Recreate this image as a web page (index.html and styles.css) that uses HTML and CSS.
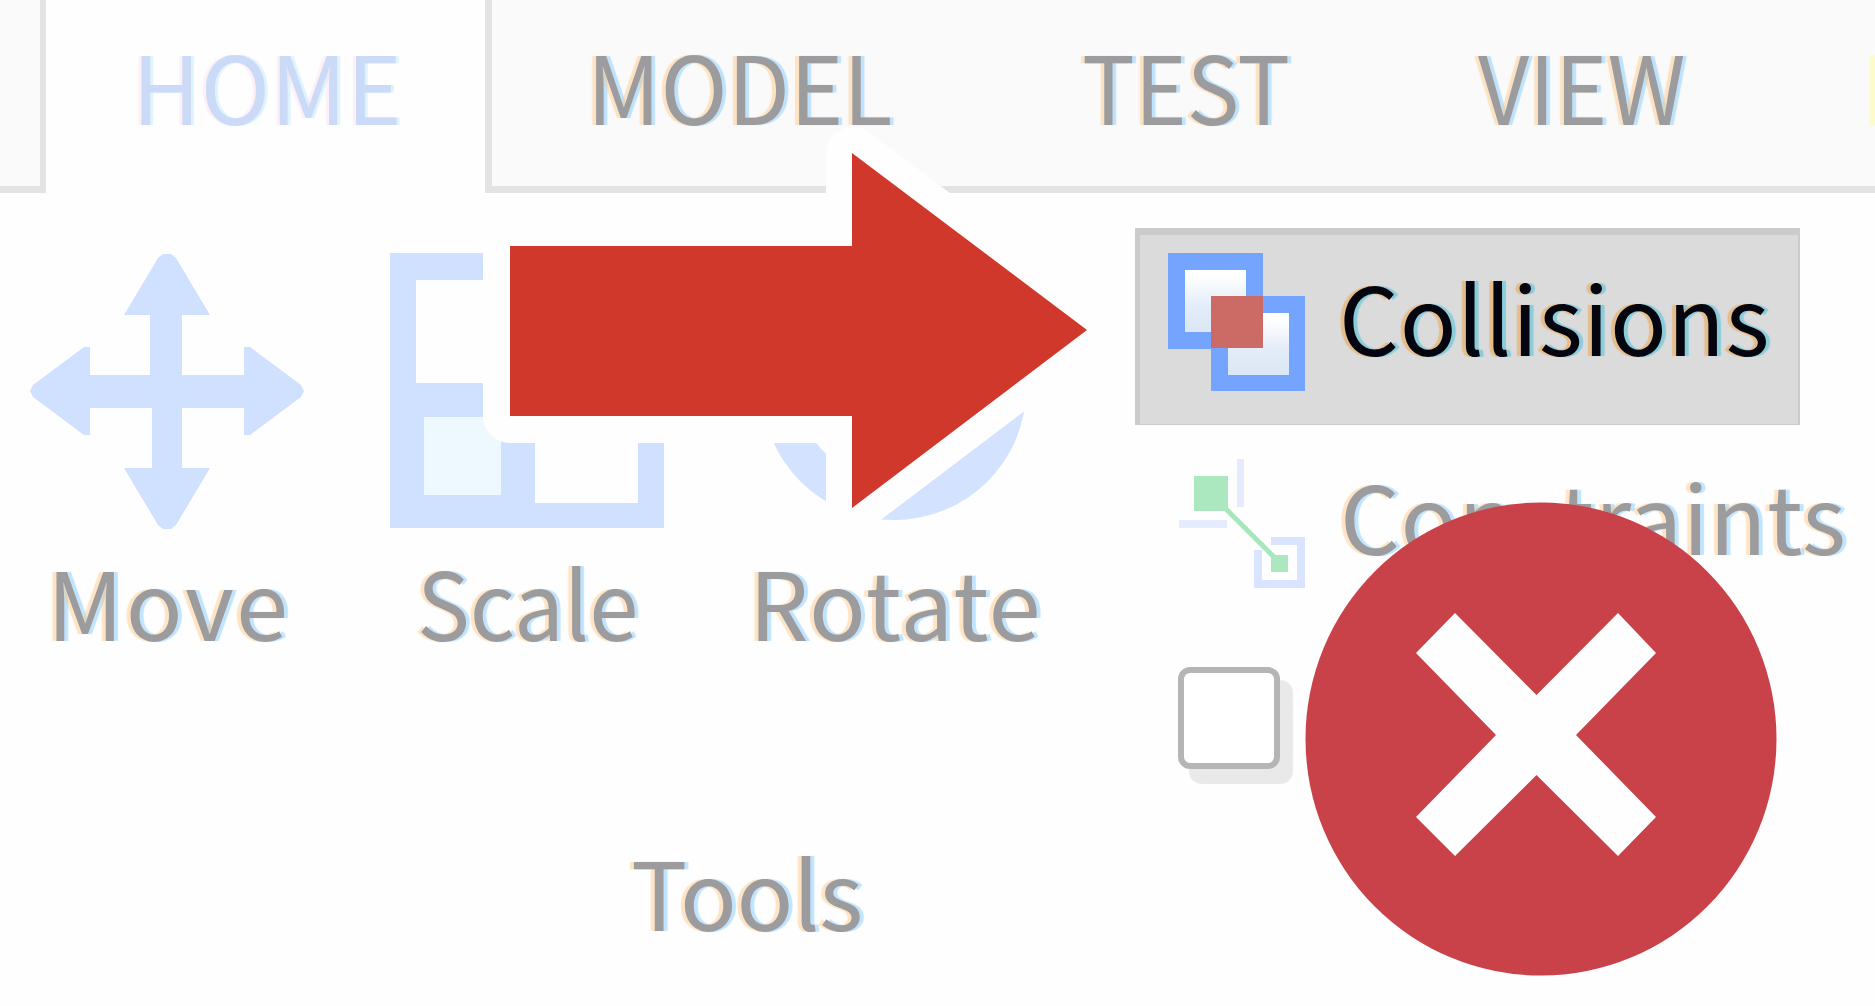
FILE: index.html
```html
<!DOCTYPE html>
<html lang="en">
<head>
<meta charset="utf-8">
<title>Ribbon</title>
<link rel="stylesheet" href="styles.css">
</head>
<body>
<div class="ribbon">
  <nav class="tabs">
    <div class="tab-prev"></div>
    <div class="tab tab-home"><span class="t-home">HOME</span></div>
    <div class="tab-rest">
      <span class="t-model">MODEL</span>
      <span class="t-test">TEST</span>
      <span class="t-view">VIEW</span>
      <i class="next-edge"></i>
    </div>
  </nav>
  <main class="panel">
    <section class="tools">
      <div class="tool-row">
        <div class="tool tool-move">
          <svg width="276" height="276" viewBox="0 0 276 276"><path fill="#d0e0ff" d="M134 1h8l5 4 34 57h-28v60h62V94h6l51 38 3 6-3 6-51 38h-6v-27h-62v60h28l-34 57-5 4h-8l-5-4-34-57h28v-60H61v27h-6L4 144l-3-6 3-6 51-38h6v28h60V62H95l34-57z"/></svg>
          <span class="t-move">Move</span>
        </div>
        <div class="tool tool-scale">
          <svg width="274" height="276" viewBox="0 0 274 276"><path fill="#d0e0ff" d="M0 0h274v275H0z"/><path fill="#fefefe" d="M26 27h222v223H145V130H26z"/><path fill="#eef8ff" d="M34 164h77v78H34z"/></svg>
          <span class="t-scale">Scale</span>
        </div>
        <div class="tool tool-rotate">
          <svg width="276" height="276" viewBox="0 0 276 276"><ellipse cx="132" cy="136" rx="132" ry="131" fill="#d3e2ff"/><circle cx="125" cy="136" r="89" fill="#fefefe"/></svg>
          <span class="t-rotate">Rotate</span>
        </div>
      </div>
      <div class="group-name"><span class="t-tools">Tools</span></div>
    </section>
    <section class="options">
      <div class="option active">
        <svg width="140" height="142" viewBox="0 0 140 142">
          <defs><linearGradient id="pane" x2="0" y2="1"><stop offset=".1" stop-color="#fff"/><stop offset=".6" stop-color="#e3ecf8"/><stop offset="1" stop-color="#dbe7f6"/></linearGradient></defs>
          <path fill="#75a4ff" d="M1 1h95v96H1zM44 44h94v95H44z"/>
          <path fill="url(#pane)" d="M18 18h61v62H18z"/><path fill="url(#pane)" d="M61 61h61v62H61z"/>
          <path fill="#cc6a66" d="M44 44h52v52H44z"/>
        </svg>
        <span class="t-coll">Collisions</span>
      </div>
      <div class="option constraints">
        <svg width="130" height="132" viewBox="0 0 130 132">
          <path fill="#e7ebff" d="M60 1h7v48h-7zM2 62h48v8H2z"/>
          <path fill="#dbe4ff" d="M94 79h34v51H77V92h8v30h35V87H94z"/>
          <path stroke="#a9e6bd" stroke-width="5" d="M46 48l54 54"/>
          <path fill="#abe7bf" d="M17 18h34v35H17zM94 97h17v17H94z"/>
        </svg>
        <span class="t-cons">Constraints</span>
      </div>
      <div class="option"><span class="checkbox"></span></div>
    </section>
  </main>
  <svg class="arrow" width="680" height="440" viewBox="450 110 680 440"><path d="M510 246H853V154L1087 330 853 507V416H510z" fill="#fefefe" stroke="#fefefe" stroke-width="54" stroke-linejoin="round"/><path d="M510 246H852V153L1087 330 852 508V416H510z" fill="#cf382a"/></svg>
  <svg class="cross" width="472" height="476" viewBox="1305 501 472 476"><ellipse cx="1541" cy="739" rx="235.500" ry="236.500" fill="#ca4249"/><path fill="#fefefe" d="M1455 613l81.500 82 81.500-82 38 40-80 82 80 82-38 39-81.500-81-81.500 81-39-39 80-82-80-82z"/></svg>
</div>
</body>
</html>
```
FILE: styles.css
```css
body { margin: 0; }
.ribbon {
  position: relative;
  width: 1875px;
  height: 1006px;
  overflow: hidden;
  background: #fefefe;
  color: #9c9c9e;
  font: 400 94px/100px "Noto Sans CJK SC", "Open Sans", sans-serif;
  text-shadow: -4px 0 1px rgba(255, 190, 110, .4), 4px 0 1px rgba(100, 190, 255, .4);
  white-space: nowrap;
}
.tabs { display: flex; height: 193px; }
.tab-prev, .tab-rest { box-sizing: border-box; background: #fafafa; border-bottom: 7px solid #e3e3e3; }
.tab-prev { width: 46px; border-right: 6px solid #e3e3e3; }
.tab-home {
  width: 439px;
  color: #cbdbf7;
  text-shadow: -3px 0 1px rgba(255, 210, 230, .3), 3px 0 1px rgba(150, 220, 255, .3);
}
.tab-rest { display: flex; flex: 1; border-left: 7px solid #e3e3e3; }
.tabs span { margin-top: 34px; flex: none; transform-origin: 0 50%; }
.t-home { display: block; margin-left: 86px; }
.t-model { width: 495px; margin-left: 95px; transform: scaleX(.963); }
.t-test { width: 396px; transform: scaleX(.938); }
.t-view { width: 392px; transform: scaleX(.945); }
.next-edge { width: 5px; height: 71px; margin-top: 55px; background: #fbfbcc; }
.panel { display: flex; }
.tools { width: 1135px; }
.tool-row { display: flex; padding-top: 60px; height: 549px; }
.tool { display: flex; flex-direction: column; }
.tool svg, .option svg { display: block; flex: none; }
.tool span { margin-top: 21px; transform-origin: 0 50%; }
.tool-move { margin-left: 29px; width: 361px; }
.tool-scale { width: 372px; }
.t-move { margin-left: 18px; letter-spacing: 2.5px; }
.t-scale { margin-left: 27px; transform: scaleX(.943); }
.t-rotate { margin-left: -13px; letter-spacing: 1.4px; }
.group-name { padding-left: 631px; margin-top: 38px; }
.t-tools { letter-spacing: -.4px; }
.options { padding-top: 35px; }
.option { display: flex; box-sizing: border-box; }
.active {
  width: 665px;
  height: 197px;
  padding: 17px 0 0 27px;
  background: #dbdbdb;
  border: solid #cbcbcb;
  border-width: 7px 2px 1px 5px;
  color: #050510;
  text-shadow: -4px 0 1px rgba(240, 160, 60, .5), 4px 0 1px rgba(60, 190, 220, .5);
}
.active span { margin: 13px 0 0 32px; letter-spacing: .7px; }
.constraints { height: 205px; padding: 33px 0 0 42px; }
.constraints span { margin: 6px 0 0 33px; letter-spacing: .6px; }
.checkbox {
  box-sizing: border-box;
  width: 102px;
  height: 102px;
  margin: 37px 0 0 43px;
  border: 6px solid #b5b5b5;
  border-radius: 12px;
  background: #fff;
  box-shadow: 12px 14px 1px 1px #e9e9e9;
}
.arrow { position: absolute; left: 450px; top: 110px; }
.cross { position: absolute; left: 1305px; top: 501px; }
```
